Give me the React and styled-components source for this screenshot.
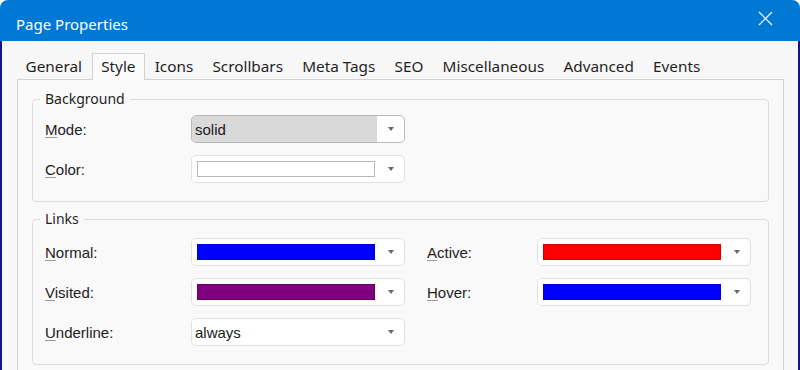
import React from 'react';
import styled, { createGlobalStyle } from 'styled-components';

const GlobalStyle = createGlobalStyle`
  html, body {
    margin: 0;
    padding: 0;
    background: #ffffff;
  }
  * {
    box-sizing: border-box;
  }
`;

const Window = styled.div`
  width: 800px;
  height: 370px;
  display: flex;
  flex-direction: column;
  overflow: hidden;
  border-radius: 8px 8px 0 0;
  background: #0078d4;
`;

const TitleBar = styled.div`
  height: 41px;
  flex: none;
  display: flex;
  align-items: flex-start;
  justify-content: space-between;
  padding: 14px 27px 0 16px;
  color: #ffffff;
`;

const Title = styled.span`
  font-family: 'Noto Sans', 'Open Sans', sans-serif;
  font-size: 15px;
  line-height: 20px;
`;

const CloseButton = styled.button`
  background: none;
  border: none;
  padding: 0;
  margin-top: -3px;
  width: 15px;
  height: 15px;
  display: flex;
  cursor: pointer;
`;

const Body = styled.div`
  flex: 1;
  display: flex;
  flex-direction: column;
  background: #f7f7f7;
  border-left: 2px solid #14148a;
  border-right: 2px solid #14148a;
  padding: 11px 14px 0 15px;
`;

const TabList = styled.div`
  display: flex;
  align-items: flex-end;
  margin-left: -1px;
  height: 27px;
  position: relative;
  z-index: 1;
`;

const Tab = styled.div`
  height: ${(p) => (p.$active ? '27px' : '26px')};
  padding: 0 8.6px;
  border: 1px solid ${(p) => (p.$active ? '#d2d2d2' : 'transparent')};
  border-bottom: none;
  background: ${(p) => (p.$active ? '#fbfbfb' : 'transparent')};
  margin-bottom: ${(p) => (p.$active ? '-1px' : '0')};
  display: flex;
  align-items: center;
  padding-bottom: ${(p) => (p.$active ? '2px' : '1px')};
  font-family: 'Noto Sans', 'Open Sans', sans-serif;
  font-size: 15.3px;
  color: #1f1f1f;
  cursor: default;
`;

const Panel = styled.div`
  flex: 1;
  border: 1px solid #d2d2d2;
  border-bottom: none;
  background: #f9f9f9;
  padding: 9px 14px 0 14px;
  display: flex;
  flex-direction: column;
  gap: 7px;
`;

const Group = styled.fieldset`
  margin: 0;
  border: 1px solid #dcdcdc;
  border-radius: 4px;
  padding: ${(p) => p.$top}px 14px 18px 12px;
`;

const Legend = styled.legend`
  font-family: 'Noto Sans', 'Open Sans', sans-serif;
  font-size: 14px;
  line-height: 20px;
  color: #1f1f1f;
  padding: 0 5px;
  margin-left: -5px;
`;

const FieldGrid = styled.div`
  display: grid;
  grid-template-columns: ${(p) => (p.$wide ? '146px 236px 110px 214px' : '146px 214px')};
  grid-auto-rows: 28px;
  row-gap: 12px;
  align-items: center;
`;

const Label = styled.label`
  font-family: 'Liberation Sans', Arial, sans-serif;
  font-size: 15px;
  color: #222222;

  u {
    text-decoration-color: #9a9a9a;
    text-underline-offset: 2px;
  }
`;

const Select = styled.div`
  width: 214px;
  height: 28px;
  display: flex;
  border: 1px solid ${(p) => (p.$strong ? '#b9b9b9' : '#e0e0e0')};
  border-radius: 5px;
  background: #ffffff;
  overflow: hidden;
`;

const Value = styled.div`
  flex: 1;
  display: flex;
  align-items: center;
  padding: ${(p) => (p.$swatch ? '5px 2px 5px 5px' : '0 0 0 3px')};
  background: ${(p) => (p.$shaded ? '#d9d9d9' : '#ffffff')};
  font-family: 'Liberation Sans', Arial, sans-serif;
  font-size: 15px;
  color: #1a1a1a;
`;

const Swatch = styled.div`
  width: 100%;
  height: 100%;
  background: ${(p) => p.$color};
  border: 1px solid ${(p) => (p.$color === '#ffffff' ? '#b8b8b8' : 'rgba(0, 0, 0, 0.18)')};
`;

const Arrow = styled.div`
  width: 27px;
  flex: none;
  display: flex;
  align-items: center;
  justify-content: center;

  &::after {
    content: '';
    border-left: 3.5px solid transparent;
    border-right: 3.5px solid transparent;
    border-top: 4px solid #666666;
  }
`;

const tabs = ['General', 'Style', 'Icons', 'Scrollbars', 'Meta Tags', 'SEO', 'Miscellaneous', 'Advanced', 'Events'];

function Field({ keyChar, rest }) {
  return (
    <Label>
      <u>{keyChar}</u>
      {rest}
    </Label>
  );
}

function ColorSelect({ color }) {
  return (
    <Select>
      <Value $swatch>
        <Swatch $color={color} />
      </Value>
      <Arrow />
    </Select>
  );
}

function TextSelect({ value, shaded }) {
  return (
    <Select $strong={shaded}>
      <Value $shaded={shaded}>{value}</Value>
      <Arrow />
    </Select>
  );
}

export default function App() {
  return (
    <>
      <GlobalStyle />
      <Window>
        <TitleBar>
          <Title>Page Properties</Title>
          <CloseButton aria-label="Close">
            <svg width="15" height="15" viewBox="0 0 15 15">
              <path d="M1 1 L14 14 M14 1 L1 14" stroke="#ffffff" strokeWidth="1.2" fill="none" />
            </svg>
          </CloseButton>
        </TitleBar>
        <Body>
          <TabList>
            {tabs.map((t) => (
              <Tab key={t} $active={t === 'Style'}>
                {t}
              </Tab>
            ))}
          </TabList>
          <Panel>
            <Group $top={6}>
              <Legend>Background</Legend>
              <FieldGrid>
                <Field keyChar="M" rest="ode:" />
                <TextSelect value="solid" shaded />
                <Field keyChar="C" rest="olor:" />
                <ColorSelect color="#ffffff" />
              </FieldGrid>
            </Group>
            <Group $top={9}>
              <Legend>Links</Legend>
              <FieldGrid $wide>
                <Field keyChar="N" rest="ormal:" />
                <ColorSelect color="#0000ff" />
                <Field keyChar="A" rest="ctive:" />
                <ColorSelect color="#ff0000" />
                <Field keyChar="V" rest="isited:" />
                <ColorSelect color="#800080" />
                <Field keyChar="H" rest="over:" />
                <ColorSelect color="#0000ff" />
                <Field keyChar="U" rest="nderline:" />
                <TextSelect value="always" />
              </FieldGrid>
            </Group>
          </Panel>
        </Body>
      </Window>
    </>
  );
}
